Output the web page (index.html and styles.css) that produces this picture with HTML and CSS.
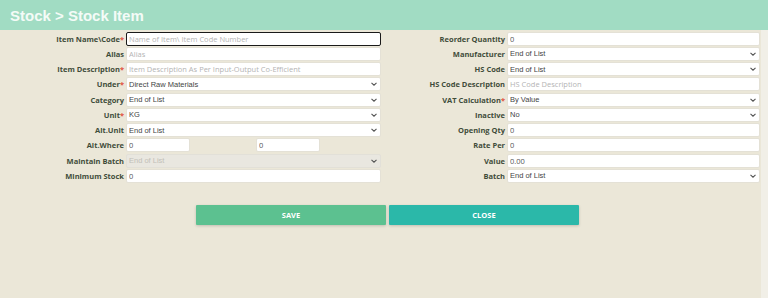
FILE: index.html
```html
<!DOCTYPE html>
<html lang="en">
<head>
    <meta charset="UTF-8">
    <meta name="viewport" content="width=device-width, initial-scale=1.0">
    <title>Stock Item</title>
    <link rel="stylesheet" href="styles.css">
</head>
<body>
    <div class="page">
        <div class="title-bar">Stock &gt; Stock Item</div>

        <form class="stock-form">
            <div class="col col-left">
                <label class="row"><span class="lbl">Item Name\Code<i>*</i></span><input class="field focus" type="text" placeholder="Name of Item\ Item Code Number"></label>
                <label class="row"><span class="lbl">Alias</span><input class="field" type="text" placeholder="Alias"></label>
                <label class="row"><span class="lbl">Item Description<i>*</i></span><input class="field" type="text" placeholder="Item Description As Per Input-Output Co-Efficient"></label>
                <label class="row"><span class="lbl">Under<i>*</i></span><select class="field"><option>Direct Raw Materials</option></select></label>
                <label class="row"><span class="lbl">Category</span><select class="field"><option>End of List</option></select></label>
                <label class="row"><span class="lbl">Unit<i>*</i></span><select class="field"><option>KG</option></select></label>
                <label class="row"><span class="lbl">Alt.Unit</span><select class="field"><option>End of List</option></select></label>
                <div class="row"><span class="lbl">Alt.Where</span>
                    <div class="pair">
                        <input class="field short" type="text" value="0">
                        <input class="field short" type="text" value="0">
                    </div>
                </div>
                <label class="row"><span class="lbl">Maintain Batch</span><select class="field" disabled><option>End of List</option></select></label>
                <label class="row"><span class="lbl">Minimum Stock</span><input class="field" type="text" value="0"></label>
            </div>

            <div class="col col-right">
                <label class="row"><span class="lbl">Reorder Quantity</span><input class="field" type="text" value="0"></label>
                <label class="row"><span class="lbl">Manufacturer</span><select class="field"><option>End of List</option></select></label>
                <label class="row"><span class="lbl">HS Code</span><select class="field"><option>End of List</option></select></label>
                <label class="row"><span class="lbl">HS Code Description</span><input class="field" type="text" placeholder="HS Code Description"></label>
                <label class="row"><span class="lbl">VAT Calculation<i>*</i></span><select class="field"><option>By Value</option></select></label>
                <label class="row"><span class="lbl">Inactive</span><select class="field"><option>No</option></select></label>
                <label class="row"><span class="lbl">Opening Qty</span><input class="field" type="text" value="0"></label>
                <label class="row"><span class="lbl">Rate Per</span><input class="field" type="text" value="0"></label>
                <label class="row"><span class="lbl">Value</span><input class="field" type="text" value="0.00"></label>
                <label class="row"><span class="lbl">Batch</span><select class="field"><option>End of List</option></select></label>
            </div>
        </form>

        <div class="actions">
            <button class="btn btn-save" type="button">SAVE</button>
            <button class="btn btn-close" type="button">CLOSE</button>
        </div>
    </div>
    <div class="scroll-strip"></div>
</body>
</html>
```

FILE: styles.css
```css
html, body {
    margin: 0;
    padding: 0;
    height: 100%;
}
body {
    display: flex;
    background-color: #ebe7d8;
    font-family: "Open Sans", Arial, sans-serif;
    overflow: hidden;
}
.page {
    flex: 1;
    min-width: 0;
}
.scroll-strip {
    width: 7px;
    background: #f1efe7;
    margin-top: 30px;
}
.title-bar {
    height: 30px;
    line-height: 31px;
    padding-left: 10px;
    margin-right: -7px;
    background-color: #a1dcc3;
    color: #f4fbf7;
    font-family: "Liberation Sans", Arial, sans-serif;
    font-weight: bold;
    font-size: 15px;
}
.stock-form {
    display: flex;
    gap: 3px;
    padding-top: 1px;
}
.col {
    display: grid;
    grid-auto-rows: 15.25px;
}
.col-left {
    width: 381px;
}
.col-right {
    width: 376px;
}
.row {
    display: flex;
    align-items: center;
    gap: 2px;
}
.lbl {
    flex: none;
    text-align: right;
    font-size: 7.5px;
    font-weight: bold;
    color: #3f4c3a;
    white-space: nowrap;
}
.col-left .lbl {
    width: 124px;
}
.col-right .lbl {
    width: 121px;
}
.lbl i {
    font-style: normal;
    color: #e0503c;
}
.field {
    flex: 1;
    min-width: 0;
    box-sizing: border-box;
    height: 14px;
    margin: 0;
    padding: 0 2px;
    border: 1px solid #e4e1d6;
    border-radius: 2px;
    background-color: #fff;
    font-family: "Open Sans", Arial, sans-serif;
    font-size: 7.5px;
    color: #555;
    outline: none;
}
.field::placeholder {
    color: #b4b4b4;
}
.field.focus {
    border-color: #1a1a1a;
    border-radius: 2px;
}
select.field {
    appearance: none;
    -webkit-appearance: none;
    font-family: "Liberation Sans", Arial, sans-serif;
    font-size: 7.5px;
    color: #444;
    background-image: url("data:image/svg+xml,%3Csvg xmlns='http://www.w3.org/2000/svg' width='8' height='6' viewBox='0 0 8 6'%3E%3Cpath d='M1.5 1.8 L4 4.2 L6.5 1.8' fill='none' stroke='%23555' stroke-width='1.1'/%3E%3C/svg%3E");
    background-repeat: no-repeat;
    background-position: right 2px center;
}
select.field:disabled {
    background-color: #e9e7e0;
    color: #c2c0b8;
    opacity: 1;
    border-color: #e2e0d8;
}
.pair {
    flex: 1;
    display: flex;
    gap: 66px;
}
.field.short {
    flex: none;
    width: 64px;
}
.actions {
    display: flex;
    gap: 3px;
    padding: 21px 0 0 196px;
}
.btn {
    width: 190px;
    height: 20px;
    border: none;
    border-radius: 1px;
    color: #fff;
    font-family: "Open Sans", Arial, sans-serif;
    font-weight: bold;
    font-size: 7.5px;
    cursor: pointer;
    box-shadow: 0 1px 3px rgba(0, 0, 0, 0.18);
}
.btn-save {
    background-color: #5cc190;
}
.btn-close {
    background-color: #2bb8a9;
}
```
